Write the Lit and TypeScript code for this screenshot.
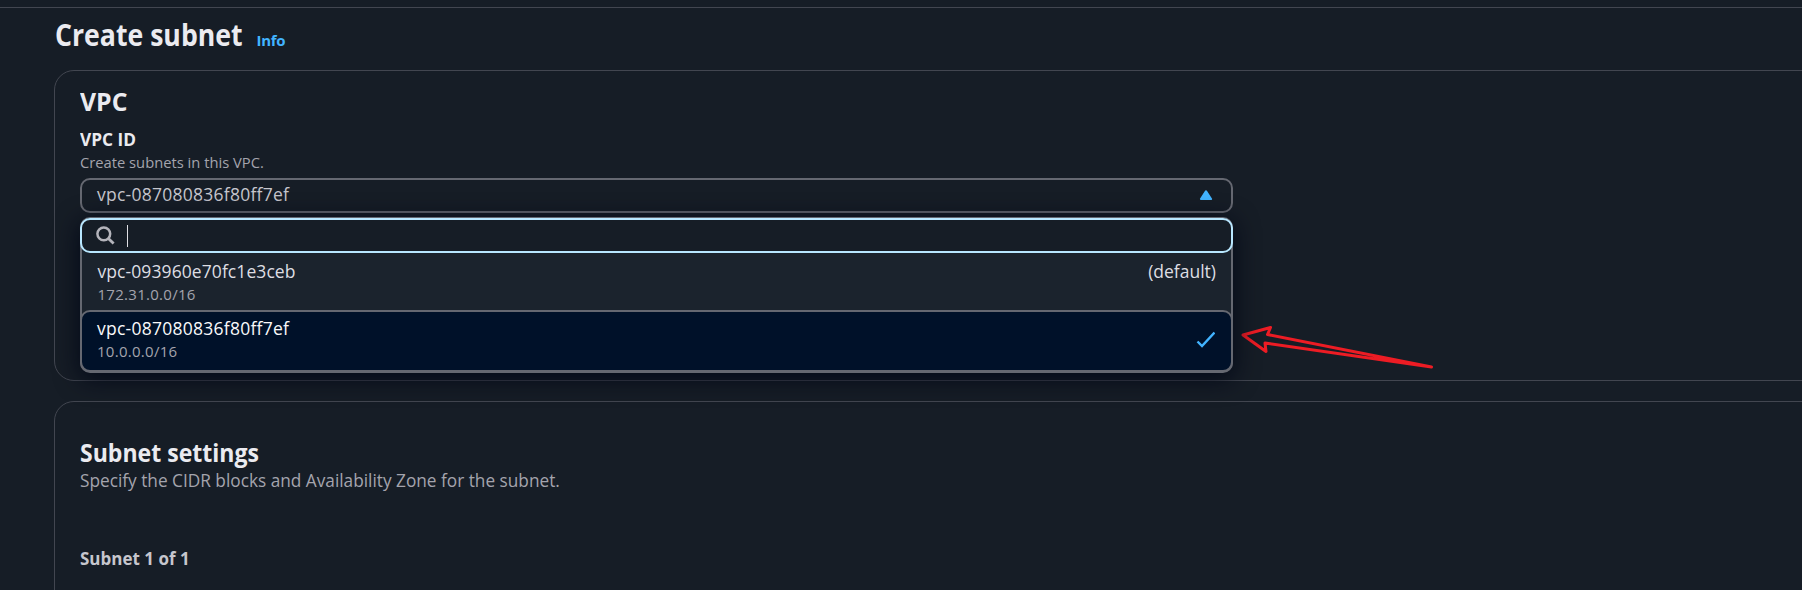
import { LitElement, html, css, svg } from "lit";
import { customElement, property } from "lit/decorators.js";
import { classMap } from "lit/directives/class-map.js";

interface Vpc {
  id: string;
  cidr: string;
  tag?: string;
}

const VPCS: Vpc[] = [
  { id: "vpc-093960e70fc1e3ceb", cidr: "172.31.0.0/16", tag: "(default)" },
  { id: "vpc-087080836f80ff7ef", cidr: "10.0.0.0/16" },
];

const checkIcon = svg`<path d="M1.5 10.5 L6 15 L18.5 1.5" fill="none" stroke="#42b4ff" stroke-width="2.4"/>`;

@customElement("vpc-select")
class VpcSelect extends LitElement {
  @property() value = "";

  static styles = css`
    :host {
      display: block;
      position: relative;
      width: 1153px;
    }
    .trigger {
      box-sizing: border-box;
      height: 35px;
      border: 2px solid #656871;
      border-radius: 10px;
      padding: 0 18px 0 15px;
      display: flex;
      align-items: center;
      justify-content: space-between;
      color: #c6c6cd;
      line-height: 25px;
    }
    .trigger .id {
      padding-bottom: 2px;
    }
    .id {
      letter-spacing: 0.25px;
    }
    svg {
      display: block;
      flex: none;
    }
    .menu {
      position: absolute;
      top: 39px;
      left: 0;
      right: 0;
      height: 156px;
      box-sizing: border-box;
      border: 2px solid #656871;
      border-top-width: 1px;
      border-bottom-width: 3px;
      border-radius: 10px;
      background: #1b232d;
      box-shadow: 0 5px 25px 1px rgba(0, 7, 22, 0.9);
    }
    .search {
      box-sizing: border-box;
      height: 35px;
      margin: 0 -2px;
      border: 2px solid #b8e7ff;
      border-radius: 10px;
      background: #161d26;
      padding-left: 14px;
      display: flex;
      align-items: center;
      gap: 12px;
    }
    .caret {
      width: 1px;
      height: 22px;
      background: #dedee3;
    }
    .option {
      box-sizing: border-box;
      height: 57px;
      padding: 6px 15px 0 15.5px;
      display: flex;
      justify-content: space-between;
      color: #dedee3;
      line-height: 25px;
    }
    .option:not(.selected) .id {
      letter-spacing: 0.08px;
    }
    .option.selected {
      height: 62px;
      margin: 0 -2px;
      padding: 4px 16px 0 15px;
      border: 2px solid #656871;
      border-radius: 10px;
      background: #001129;
      color: #f9f9fa;
    }
    .cidr {
      font-size: 15px;
      line-height: 20px;
      color: #a4a4ad;
      letter-spacing: 0.28px;
    }
    .check {
      margin-top: 15px;
    }
  `;

  render() {
    return html`
      <div class="trigger">
        <span class="id">${this.value}</span>
        <svg width="14" height="12" viewBox="0 0 14 12">
          <path d="M7 1.3 L12 9 H2 Z" fill="#42b4ff" stroke="#42b4ff" stroke-width="2.2" stroke-linejoin="round" />
        </svg>
      </div>
      <div class="menu">
        <div class="search">
          <svg width="19" height="19" viewBox="0 0 19 19" fill="none" stroke="#b4b4bb" stroke-width="2.5">
            <circle cx="7.8" cy="7.8" r="6.4" />
            <path d="M12.4 12.4 L17.6 17.6" stroke-width="2.8" />
          </svg>
          <span class="caret"></span>
        </div>
        ${VPCS.map((vpc) => {
          const selected = vpc.id === this.value;
          return html`
            <div class=${classMap({ option: true, selected })}>
              <div>
                <div class="id">${vpc.id}</div>
                <div class="cidr">${vpc.cidr}</div>
              </div>
              ${vpc.tag ? html`<span>${vpc.tag}</span>` : ""}
              ${selected
                ? html`<svg class="check" width="19" height="17" viewBox="0 0 19 17">${checkIcon}</svg>`
                : ""}
            </div>
          `;
        })}
      </div>
    `;
  }
}

@customElement("app-root")
class AppRoot extends LitElement {
  static styles = css`
    :host {
      display: block;
      position: relative;
      box-sizing: border-box;
      height: 590px;
      overflow: hidden;
      padding-top: 7px;
      background: #161d26;
      color: #ebebf0;
      font: 17.5px "Open Sans", "Noto Sans", sans-serif;
    }
    h1,
    h2,
    h3,
    p {
      margin: 0;
      transform-origin: 0 0;
    }
    main {
      border-top: 1px solid #424650;
      padding-left: 54px;
    }
    header {
      display: flex;
      align-items: baseline;
      height: 62px;
      padding: 8px 0 0 0.5px;
      box-sizing: border-box;
    }
    h1 {
      width: 202px;
      white-space: nowrap;
      font-size: 30px;
      line-height: 37px;
      transform: scaleX(0.888);
    }
    .info {
      font-size: 15px;
      font-weight: 700;
      letter-spacing: -0.3px;
      color: #42b4ff;
    }
    .card {
      box-sizing: border-box;
      width: 1800px;
      height: 311px;
      border: 1px solid #424650;
      border-radius: 20px;
      padding: 15px 0 0 25px;
    }
    .card + .card {
      margin-top: 20px;
      padding-top: 35px;
    }
    h2 {
      font-size: 25px;
      line-height: 30px;
      transform: scaleX(0.922);
    }
    .vpc-title {
      transform: scaleX(0.99);
    }
    .label {
      font-weight: 700;
      line-height: 25px;
      transform: scaleX(0.985);
      margin-top: 11px;
    }
    .hint {
      font-size: 15px;
      line-height: 20px;
      transform: scaleX(0.982);
      color: #a4a4ad;
      margin-bottom: 6px;
    }
    .description {
      line-height: 25px;
      transform: scaleX(0.985);
      color: #a4a4ad;
      margin-top: 1px;
    }
    h3 {
      font-size: 17.5px;
      line-height: 25px;
      transform: scaleX(0.971);
      color: #c6c6cd;
      margin-top: 53px;
    }
    .pointer {
      position: absolute;
      left: 1238px;
      top: 320px;
    }
    vpc-select {
      z-index: 1;
    }
  `;

  render() {
    return html`
      <main>
        <header>
          <h1>Create subnet</h1>
          <span class="info">Info</span>
        </header>
        <section class="card">
          <h2 class="vpc-title">VPC</h2>
          <p class="label">VPC ID</p>
          <p class="hint">Create subnets in this VPC.</p>
          <vpc-select value="vpc-087080836f80ff7ef"></vpc-select>
        </section>
        <section class="card">
          <h2>Subnet settings</h2>
          <p class="description">Specify the CIDR blocks and Availability Zone for the subnet.</p>
          <h3>Subnet 1 of 1</h3>
        </section>
      </main>
      <svg class="pointer" width="200" height="54" viewBox="1238 320 200 54">
        <path
          d="M1431.5 367 L1267.5 334.5 L1270.5 327.5 L1243 335 L1266 351.5 L1265 343 Z"
          fill="none" stroke="#ed1c24" stroke-width="3" stroke-linejoin="round"
        />
      </svg>
    `;
  }
}
